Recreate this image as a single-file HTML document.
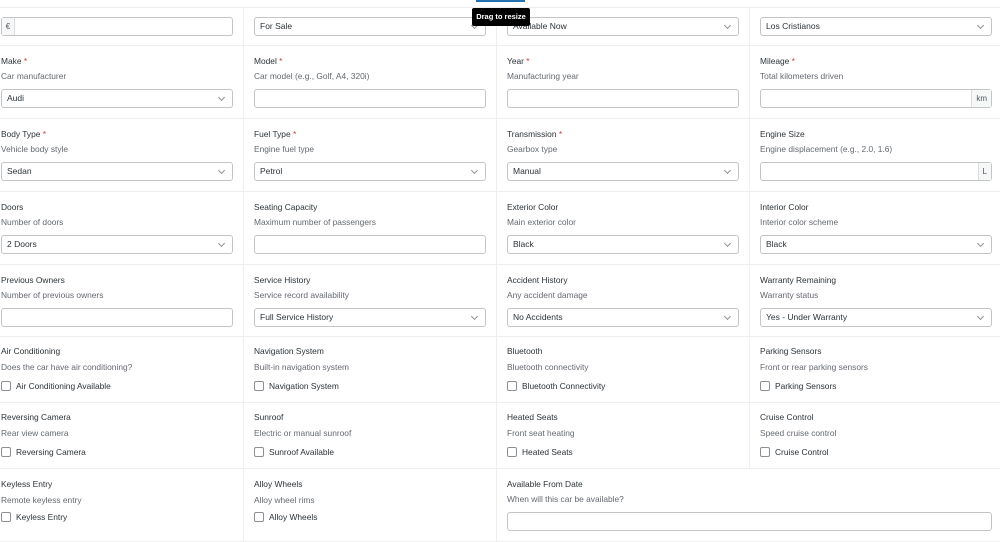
<!DOCTYPE html>
<html><head><meta charset="utf-8"><style>
*{box-sizing:border-box;margin:0;padding:0}
body{width:1000px;height:532px;overflow:hidden;background:#fff;font-family:"Liberation Sans",Arial,sans-serif;color:#1d2327;position:relative}
.wrap{position:absolute;left:-9px;top:7px;width:1020px;border-top:1px solid #eee}
.row{display:flex;border-bottom:1px solid #eee}
.c{width:253px;border-right:1px solid #eee;padding:9px 10px 10px 10px;flex:none}
.top .c{padding:9px 10px 9px 10px}
.l{font-size:8.4px;line-height:12px;height:12px;color:#2c3338;white-space:nowrap}
.l b{color:#d63638;font-weight:normal}
.d{font-size:8.4px;line-height:12px;height:12px;color:#646970;margin-top:3px;white-space:nowrap}
.i{margin-top:7px;height:19px;border:1px solid #c3c4c7;border-radius:3px;background:#fff;font-size:8.5px;line-height:17px;padding-left:5px;position:relative;color:#2c3338}
.s::after{content:"";position:absolute;right:8px;top:5px;width:4px;height:4px;border-right:1px solid #8c8f94;border-bottom:1px solid #8c8f94;transform:rotate(45deg)}
.top .i{margin-top:0}
.suf{position:absolute;right:0;top:0;bottom:0;border-left:1px solid #dcdcde;background:#f6f7f7;padding:0 4px;color:#50575e;font-size:8px}
.pre{position:absolute;left:0;top:0;bottom:0;border-right:1px solid #dcdcde;background:#f6f7f7;width:13px;text-align:center;font-size:8px;color:#50575e}
.ck{margin-top:7px;height:12px;font-size:8.4px;line-height:12px;color:#2c3338;white-space:nowrap;display:flex;align-items:center}
.ck span{display:inline-block;width:10px;height:10px;border:1px solid #8c8f94;border-radius:2px;margin-right:5px;background:#fff}
.cb .c{padding-top:8px;padding-bottom:10px}
.cb .d{margin-top:4px}
.tip{position:absolute;left:472px;top:8px;width:58px;height:18px;background:#000;color:#fff;font-size:7.5px;font-weight:bold;line-height:18px;text-align:center;border-radius:2px}
.bar{position:absolute;left:476px;top:0;width:49px;height:2px;background:#2271b1}
.last .c{padding-top:9px}
.last .ck{margin-top:5px}
</style></head><body>
<div class="bar"></div>
<div class="wrap">
<div class="row top">
<div class="c"><div class="i"><div class="pre">€</div></div></div>
<div class="c"><div class="i s">For Sale</div></div>
<div class="c"><div class="i s">Available Now</div></div>
<div class="c"><div class="i s">Los Cristianos</div></div>
</div>
<div class="row">
<div class="c"><div class="l">Make <b>*</b></div><div class="d">Car manufacturer</div><div class="i s">Audi</div></div>
<div class="c"><div class="l">Model <b>*</b></div><div class="d">Car model (e.g., Golf, A4, 320i)</div><div class="i"></div></div>
<div class="c"><div class="l">Year <b>*</b></div><div class="d">Manufacturing year</div><div class="i"></div></div>
<div class="c"><div class="l">Mileage <b>*</b></div><div class="d">Total kilometers driven</div><div class="i"><div class="suf">km</div></div></div>
</div>
<div class="row">
<div class="c"><div class="l">Body Type <b>*</b></div><div class="d">Vehicle body style</div><div class="i s">Sedan</div></div>
<div class="c"><div class="l">Fuel Type <b>*</b></div><div class="d">Engine fuel type</div><div class="i s">Petrol</div></div>
<div class="c"><div class="l">Transmission <b>*</b></div><div class="d">Gearbox type</div><div class="i s">Manual</div></div>
<div class="c"><div class="l">Engine Size</div><div class="d">Engine displacement (e.g., 2.0, 1.6)</div><div class="i"><div class="suf">L</div></div></div>
</div>
<div class="row">
<div class="c"><div class="l">Doors</div><div class="d">Number of doors</div><div class="i s">2 Doors</div></div>
<div class="c"><div class="l">Seating Capacity</div><div class="d">Maximum number of passengers</div><div class="i"></div></div>
<div class="c"><div class="l">Exterior Color</div><div class="d">Main exterior color</div><div class="i s">Black</div></div>
<div class="c"><div class="l">Interior Color</div><div class="d">Interior color scheme</div><div class="i s">Black</div></div>
</div>
<div class="row" style="height:72px">
<div class="c"><div class="l">Previous Owners</div><div class="d">Number of previous owners</div><div class="i"></div></div>
<div class="c"><div class="l">Service History</div><div class="d">Service record availability</div><div class="i s">Full Service History</div></div>
<div class="c"><div class="l">Accident History</div><div class="d">Any accident damage</div><div class="i s">No Accidents</div></div>
<div class="c"><div class="l">Warranty Remaining</div><div class="d">Warranty status</div><div class="i s">Yes - Under Warranty</div></div>
</div>
<div class="row cb" style="height:66px">
<div class="c"><div class="l">Air Conditioning</div><div class="d">Does the car have air conditioning?</div><div class="ck"><span></span>Air Conditioning Available</div></div>
<div class="c"><div class="l">Navigation System</div><div class="d">Built-in navigation system</div><div class="ck"><span></span>Navigation System</div></div>
<div class="c"><div class="l">Bluetooth</div><div class="d">Bluetooth connectivity</div><div class="ck"><span></span>Bluetooth Connectivity</div></div>
<div class="c"><div class="l">Parking Sensors</div><div class="d">Front or rear parking sensors</div><div class="ck"><span></span>Parking Sensors</div></div>
</div>
<div class="row cb" style="height:66px">
<div class="c"><div class="l">Reversing Camera</div><div class="d">Rear view camera</div><div class="ck"><span></span>Reversing Camera</div></div>
<div class="c"><div class="l">Sunroof</div><div class="d">Electric or manual sunroof</div><div class="ck"><span></span>Sunroof Available</div></div>
<div class="c"><div class="l">Heated Seats</div><div class="d">Front seat heating</div><div class="ck"><span></span>Heated Seats</div></div>
<div class="c"><div class="l">Cruise Control</div><div class="d">Speed cruise control</div><div class="ck"><span></span>Cruise Control</div></div>
</div>
<div class="row cb last">
<div class="c"><div class="l">Keyless Entry</div><div class="d">Remote keyless entry</div><div class="ck"><span></span>Keyless Entry</div></div>
<div class="c"><div class="l">Alloy Wheels</div><div class="d">Alloy wheel rims</div><div class="ck"><span></span>Alloy Wheels</div></div>
<div class="c" style="width:506px"><div class="l">Available From Date</div><div class="d" style="margin-top:3px">When will this car be available?</div><div class="i"></div></div>
</div>
</div>
<div class="tip">Drag to resize</div>
</body></html>
